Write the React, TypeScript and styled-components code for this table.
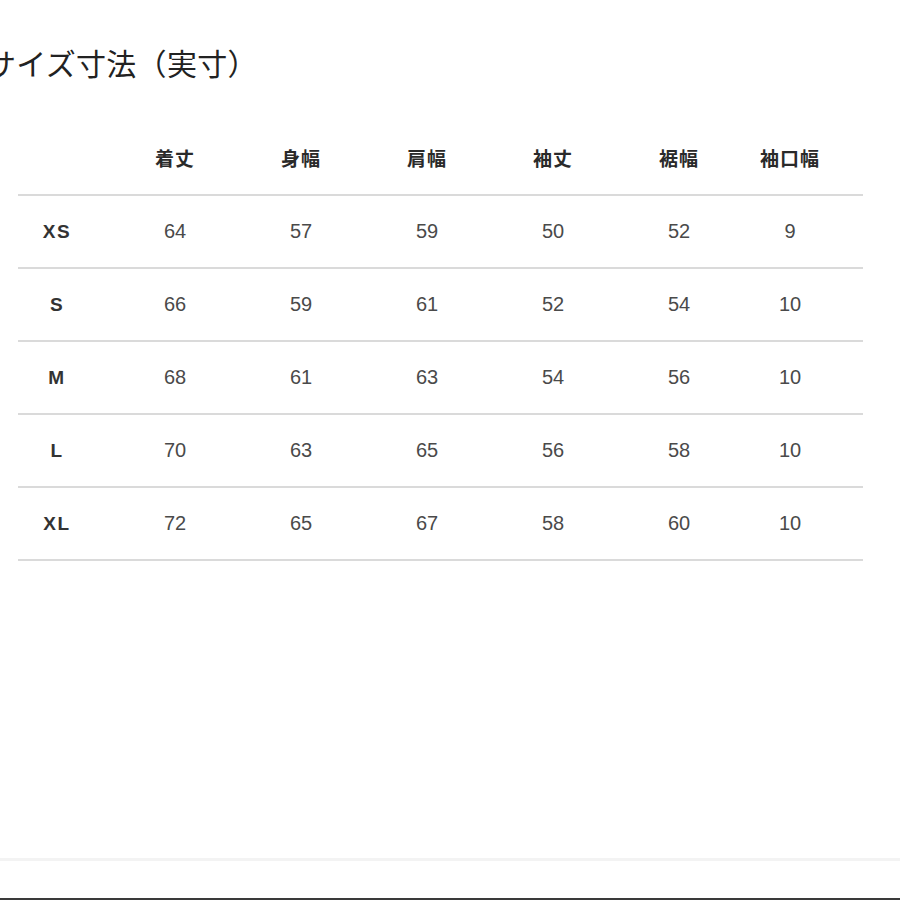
import styled, { createGlobalStyle } from 'styled-components';

const GlobalStyle = createGlobalStyle`
  html, body {
    margin: 0;
    padding: 0;
    background: #fff;
  }
  body {
    font-family: "Liberation Sans", "Noto Sans CJK JP", sans-serif;
  }
`;

const headers = ['', '着丈', '身幅', '肩幅', '袖丈', '裾幅', '袖口幅'];

const rows: [string, number[]][] = [
  ['XS', [64, 57, 59, 50, 52, 9]],
  ['S', [66, 59, 61, 52, 54, 10]],
  ['M', [68, 61, 63, 54, 56, 10]],
  ['L', [70, 63, 65, 56, 58, 10]],
  ['XL', [72, 65, 67, 58, 60, 10]],
];

export default function App() {
  return (
    <Page>
      <GlobalStyle />
      <Title>サイズ寸法（実寸）</Title>

      <Table>
        <Row>
          {headers.map((h, i) => (
            <HeadCell key={i}>{h}</HeadCell>
          ))}
          <Cell />
        </Row>
        {rows.map(([size, values]) => (
          <Row key={size}>
            <SizeCell>{size}</SizeCell>
            {values.map((v, i) => (
              <Cell key={i}>{v}</Cell>
            ))}
            <Cell />
          </Row>
        ))}
      </Table>

      <Spacer />
      <FaintRule />
      <BottomBar />
    </Page>
  );
}

const Page = styled.div`
  height: 900px;
  display: flex;
  flex-direction: column;
  overflow: hidden;
`;

const Title = styled.h1`
  margin: 44px 0 0 -14px;
  font-family: "Noto Sans CJK JP", sans-serif;
  font-size: 30px;
  font-weight: 400;
  line-height: 36px;
  letter-spacing: 0.3px;
  color: #222;
  white-space: nowrap;
`;

const Table = styled.div`
  margin: 42px 0 0 18px;
  width: 845px;
  display: flex;
  flex-direction: column;
`;

const Row = styled.div`
  display: grid;
  grid-template-columns: 94px repeat(5, 126px) 96px 1fr;
  height: 73px;
  align-items: center;
  border-bottom: 2px solid #dadada;
  box-sizing: border-box;

  &:first-child {
    height: 74px;
  }
`;

const Cell = styled.div`
  text-align: center;
  font-family: "Liberation Sans", Arial, sans-serif;
  font-size: 20px;
  color: #4a4a4a;
`;

const HeadCell = styled.div`
  text-align: center;
  font-family: "Noto Sans CJK JP", sans-serif;
  font-size: 19px;
  font-weight: 700;
  color: #2a2a2a;
  letter-spacing: 1px;
  margin-bottom: 2px;
`;

const SizeCell = styled.div`
  text-align: center;
  padding-right: 16px;
  font-family: "Liberation Sans", Arial, sans-serif;
  font-size: 19px;
  font-weight: 700;
  color: #333;
  letter-spacing: 1.5px;
`;

const Spacer = styled.div`
  flex: 1;
`;

const FaintRule = styled.div`
  height: 3px;
  background: #f3f3f3;
  margin-bottom: 37px;
`;

const BottomBar = styled.div`
  height: 2px;
  background: #3a3a3a;
`;
